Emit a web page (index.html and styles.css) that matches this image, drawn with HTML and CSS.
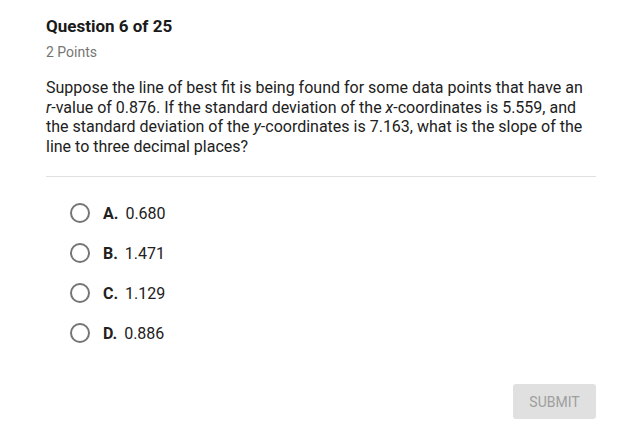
FILE: index.html
```html
<!DOCTYPE html>
<html>
<head>
<meta charset="utf-8">
<link rel="stylesheet" href="styles.css">
</head>
<body>
<div class="page">
  <h1 class="title">Question 6 of 25</h1>
  <div class="points">2 Points</div>
  <p class="question">Suppose the line of best fit is being found for some data points that have an <span class="nw"><i>r</i>-value</span> of 0.876. If the standard deviation of the <span class="nw"><i>x</i>-coordinates</span> is 5.559, and the standard deviation of the <span class="nw"><i>y</i>-coordinates</span> is 7.163, what is the slope of the line to three decimal places?</p>
  <hr class="sep">
  <ul class="options">
    <li class="option"><span class="radio"></span><b>A.</b><span class="val">0.680</span></li>
    <li class="option"><span class="radio"></span><b>B.</b><span class="val">1.471</span></li>
    <li class="option"><span class="radio"></span><b>C.</b><span class="val">1.129</span></li>
    <li class="option"><span class="radio"></span><b>D.</b><span class="val">0.886</span></li>
  </ul>
  <div class="actions"><button class="submit">SUBMIT</button></div>
</div>
</body>
</html>
```
FILE: styles.css
```css
html, body { margin: 0; padding: 0; background: #fff; }
body { font-family: Roboto, "Liberation Sans", sans-serif; color: #212121; }
.page { padding: 16px 47px 0 46px; }
.title { margin: 0; font-size: 17px; font-weight: 700; line-height: 20px; color: #1a1a1a; }
.points { margin-top: 8px; font-size: 14px; line-height: 16px; color: #757575; }
.question { margin: 18px 0 0; font-size: 16px; line-height: 19.5px; color: #212121; }
.nw { white-space: nowrap; }
.sep { margin: 20px 0 0; border: 0; border-top: 1px solid #e0e0e0; }
.options { list-style: none; margin: 16px 0 0; padding: 0 0 0 24px; }
.option { display: flex; align-items: center; height: 40px; font-size: 16px; }
.radio { width: 16px; height: 16px; border: 2px solid #757575; border-radius: 50%; margin-right: 13px; }
.option b { font-weight: 700; margin-right: 7px; }
.actions { display: flex; justify-content: flex-end; margin-top: 31px; }
.submit { font-family: Roboto, "Liberation Sans", sans-serif; font-size: 14px; color: #9e9e9e; background: #e0e0e0; border: 0; border-radius: 3px; width: 83px; height: 35px; padding: 0; }
```
